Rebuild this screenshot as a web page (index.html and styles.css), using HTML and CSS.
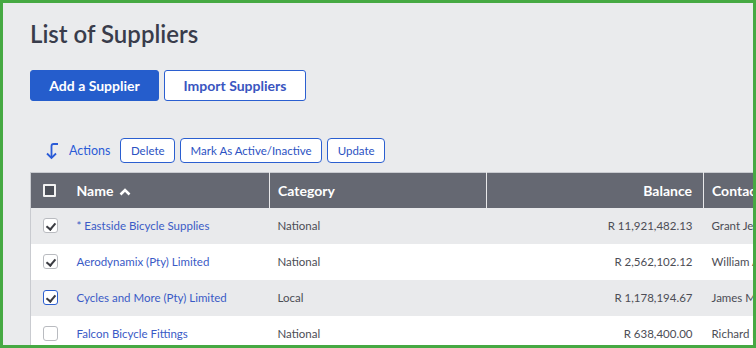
FILE: index.html
```html
<!DOCTYPE html>
<html lang="en">
<head>
    <meta charset="UTF-8">
    <title>List of Suppliers</title>
    <link rel="stylesheet" href="styles.css">
</head>
<body>
    <div class="frame">
        <h1>List of Suppliers</h1>

        <!-- Top buttons -->
        <div class="top-buttons">
            <button class="btn btn-primary">Add a Supplier</button>
            <button class="btn btn-outline">Import Suppliers</button>
        </div>

        <!-- Bulk actions -->
        <div class="actions">
            <svg class="actions-icon" width="16" height="18" viewBox="0 0 16 18">
                <path d="M15 2 H10.5 Q8.5 2 8.5 4 V16" fill="none" stroke="#2a5bd7" stroke-width="1.8"/>
                <path d="M4 11.5 L8.5 16 L13 11.5" fill="none" stroke="#2a5bd7" stroke-width="1.8"/>
            </svg>
            <span class="actions-label">Actions</span>
            <button class="btn-small">Delete</button>
            <button class="btn-small">Mark As Active/Inactive</button>
            <button class="btn-small">Update</button>
        </div>

        <!-- Suppliers table -->
        <table>
            <thead>
                <tr>
                    <th class="col-check"><span class="head-box"></span></th>
                    <th class="col-name">Name
                        <svg class="sort" width="12" height="9" viewBox="0 0 12 9"><path d="M1.5 7.5 L6 3 L10.5 7.5" fill="none" stroke="#fff" stroke-width="2.6"/></svg>
                    </th>
                    <th class="col-cat">Category</th>
                    <th class="col-bal">Balance</th>
                    <th class="col-contact">Contact Name</th>
                </tr>
            </thead>
            <tbody>
                <tr>
                    <td class="col-check"><span class="box checked"></span></td>
                    <td><a href="#">* Eastside Bicycle Supplies</a></td>
                    <td>National</td>
                    <td class="col-bal">R 11,921,482.13</td>
                    <td>Grant Jenkins</td>
                </tr>
                <tr>
                    <td class="col-check"><span class="box checked"></span></td>
                    <td><a href="#">Aerodynamix (Pty) Limited</a></td>
                    <td>National</td>
                    <td class="col-bal">R 2,562,102.12</td>
                    <td>William Adams</td>
                </tr>
                <tr>
                    <td class="col-check"><span class="box checked focus"></span></td>
                    <td><a href="#">Cycles and More (Pty) Limited</a></td>
                    <td>Local</td>
                    <td class="col-bal">R 1,178,194.67</td>
                    <td>James Miller</td>
                </tr>
                <tr>
                    <td class="col-check"><span class="box"></span></td>
                    <td><a href="#">Falcon Bicycle Fittings</a></td>
                    <td>National</td>
                    <td class="col-bal">R 638,400.00</td>
                    <td>Richard Brown</td>
                </tr>
            </tbody>
        </table>
    </div>
</body>
</html>
```

FILE: styles.css
```css
/* General styling */
* {
    margin: 0;
    padding: 0;
    box-sizing: border-box;
}
body {
    font-family: Lato, 'Noto Sans', sans-serif;
    background: #fff;
    width: 756px;
    height: 348px;
    overflow: hidden;
}
.frame {
    width: 756px;
    height: 348px;
    border: 3px solid #46a943;
    background: #eaebed;
    padding: 0 0 0 27px;
    overflow: hidden;
}
h1 {
    font-size: 24px;
    font-weight: 600;
    color: #393c4b;
    margin-top: 16px;
    line-height: 30px;
}

/* Buttons */
.top-buttons {
    display: flex;
    gap: 5px;
    margin-top: 21px;
}
.btn {
    height: 31px;
    padding: 0;
    font-family: inherit;
    font-size: 14px;
    font-weight: bold;
    border-radius: 3px;
    cursor: pointer;
}
.btn-primary {
    background: #255dcc;
    color: #fff;
    border: 1px solid #255dcc;
    width: 129px;
}
.btn-outline {
    background: #fff;
    color: #3a55c0;
    border: 1px solid #2b5fd0;
    width: 142px;
}

/* Actions row */
.actions {
    display: flex;
    align-items: center;
    margin-top: 37px;
    height: 25px;
}
.actions-icon {
    margin-left: 13px;
    margin-right: 10px;
}
.actions-label {
    font-size: 12.5px;
    color: #2a5bd7;
    margin-right: 10px;
}
.btn-small {
    height: 25px;
    padding: 0 9.5px;
    margin-right: 5px;
    font-family: inherit;
    font-size: 11.5px;
    color: #2c52c2;
    background: #fff;
    border: 1px solid #2b5fd0;
    border-radius: 4px;
}

/* Table */
table {
    border-collapse: collapse;
    margin-top: 9px;
    width: 873px;
    table-layout: fixed;
    border-left: 1px solid #c9cbd0;
    border-top: 1px solid #c9cbd0;
}
th {
    height: 35px;
    background: #656872;
    color: #fff;
    font-size: 14px;
    font-weight: bold;
    text-align: left;
    padding: 0 8px;
    border-right: 1px solid #e8e8ea;
}
th.col-check {
    border-right: none;
}
.col-check {
    width: 38px;
    padding: 0 0 0 12px;
}
.col-name {
    width: 201px;
}
.col-cat {
    width: 217px;
}
.col-bal {
    width: 217px;
}
th.col-bal, td.col-bal {
    text-align: right;
    padding-right: 11px;
}
td {
    height: 36px;
    font-size: 11.5px;
    color: #4c4d55;
    padding: 0 8px;
}
td.col-check {
    padding-left: 12px;
}
tbody tr:nth-child(odd) {
    background: #e9eaec;
}
tbody tr:nth-child(even) {
    background: #fff;
}
a {
    color: #3a5ac6;
    text-decoration: none;
}
.sort {
    margin-left: 2px;
    vertical-align: 0;
}

/* Checkboxes */
.head-box {
    display: block;
    width: 13px;
    height: 13px;
    border: 2px solid #f2f2f2;
    background: #4c4f58;
    border-radius: 1px;
}
.box {
    display: block;
    width: 15px;
    height: 15px;
    border: 1px solid #b9bbc0;
    border-radius: 3px;
    background: #fff;
    position: relative;
}
.box.focus {
    border-color: #2b5fd0;
}
.box.checked::after {
    content: "";
    position: absolute;
    left: 4px;
    top: 1.5px;
    width: 4px;
    height: 7px;
    border: solid #3b3c42;
    border-width: 0 2.5px 2.5px 0;
    transform: rotate(40deg);
}
```
